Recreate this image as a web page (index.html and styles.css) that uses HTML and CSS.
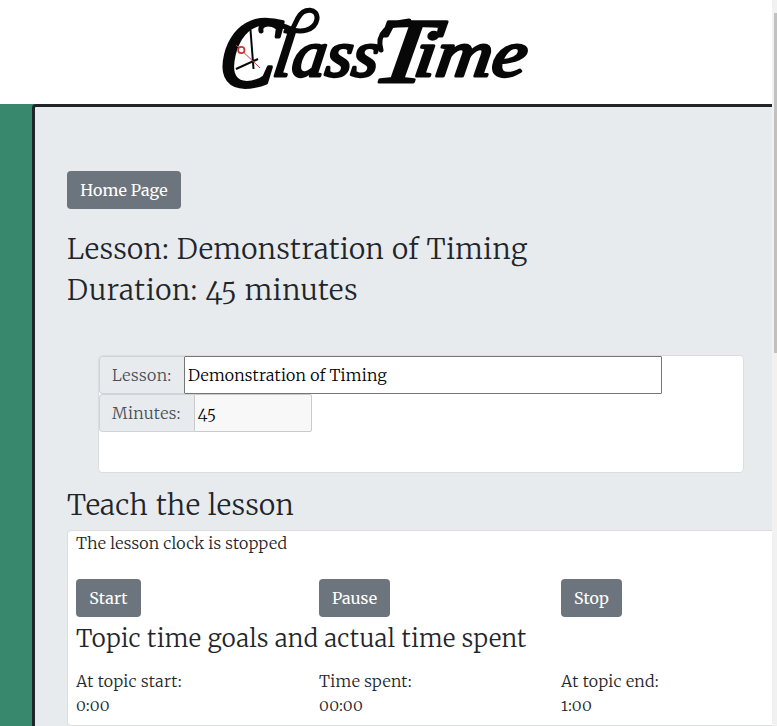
FILE: index.html
```html
<!DOCTYPE html>
<html lang="en">
<head>
<meta charset="utf-8">
<title>ClassTime</title>
<link rel="stylesheet" href="styles.css">
</head>
<body>
<div class="page">
  <header class="masthead">
    <svg class="logo" width="320" height="104" viewBox="214 0 320 104" role="img" aria-label="ClassTime">
      <text class="wordmark" transform="translate(0 80) skewX(-8) translate(0 -80)"><tspan class="cap-c" x="217" y="86" textLength="57" lengthAdjust="spacingAndGlyphs">C</tspan><tspan class="small" x="271" y="76" textLength="105" lengthAdjust="spacingAndGlyphs">lass</tspan><tspan class="cap-t" x="370" y="82" textLength="62" lengthAdjust="spacingAndGlyphs">T</tspan><tspan class="small" x="412" y="76" textLength="112" lengthAdjust="spacingAndGlyphs">ime</tspan></text>
      <path class="swash" d="M261 31 C259 22 273 23 286 27 C301 35 315 30 317 19 C318 8 304 7 298 18 L290 34"/>
      <path class="swash" d="M381 50 C376 34 388 23 409 21"/>
      <path d="M250.500 30 L253.500 69 M236 69 L258 59" stroke="#080808" stroke-width="2" fill="none"/>
      <path d="M236 45 L260 68" stroke="#c9343b" stroke-width="1"/>
      <circle cx="241.300" cy="50" r="3.200" fill="#fff" stroke="#c9343b" stroke-width="1.700"/>
    </svg>
  </header>
  <main class="panel">
    <button class="btn home">Home Page</button>
    <h2 class="title">Lesson: Demonstration of Timing<br><span class="duration">Duration: 45 minutes</span></h2>
    <section class="card details">
      <div class="group"><label class="label-lesson">Lesson:</label><div class="field name"><span>Demonstration of Timing</span></div></div>
      <div class="group"><label class="label-minutes">Minutes:</label><div class="field minutes"><span>45</span></div></div>
    </section>
    <h2 class="teach">Teach the lesson</h2>
    <section class="card clock">
      <p class="status">The lesson clock is stopped</p>
      <div class="row actions">
        <div><button class="btn start">Start</button></div>
        <div><button class="btn pause">Pause</button></div>
        <div><button class="btn stop">Stop</button></div>
      </div>
      <h3>Topic time goals and actual time spent</h3>
      <div class="row times">
        <div><span>At topic start:</span><br><span>0:00</span></div>
        <div><span>Time spent:</span><br><span>00:00</span></div>
        <div><span>At topic end:</span><br><span>1:00</span></div>
      </div>
    </section>
  </main>
</div>
<div class="scrollbar"><div class="thumb"></div></div>
</body>
</html>
```
FILE: styles.css
```css
* { box-sizing: border-box; }
body {
  margin: 0;
  height: 726px;
  display: flex;
  overflow: hidden;
  background: #38886e;
  color: #212529;
  font: 300 16px/24px Merriweather, "DejaVu Serif Condensed", "DejaVu Serif", serif;
  font-variant-numeric: oldstyle-nums;
  letter-spacing: 0.2px;
}
.page { width: 772px; height: 726px; overflow: hidden; }
.masthead { height: 104px; padding-left: 214px; background: #fff; }
.logo { display: block; overflow: visible; }
.wordmark {
  font-family: "Liberation Serif", serif;
  font-style: italic;
  font-weight: 400;
  letter-spacing: 0;
  fill: #080808;
  stroke: #080808;
  stroke-width: 3px;
  stroke-linejoin: round;
}
.swash { fill: none; stroke: #080808; stroke-width: 5px; stroke-linecap: round; }
.cap-c { font-size: 100px; stroke-width: 4px; }
.cap-t { font-size: 92px; }
.small { font-size: 66px; }
.panel {
  width: 800px;
  height: 700px;
  margin-left: 32px;
  padding: 64px 32px 0;
  border: 3px solid #212529;
  border-radius: 4px;
  background: #e8ebee;
}
.btn {
  display: block;
  height: 38px;
  padding: 0;
  border: 0;
  border-radius: 4px;
  background: #6c757d;
  color: #fff;
  font: inherit;
  font-weight: 400;
  letter-spacing: 0.1px;
}
.home { width: 114px; }
.start { width: 65px; }
.pause { width: 71px; }
.stop { width: 61px; }
h2, h3, p { margin: 0; font-weight: 300; white-space: nowrap; }
h2 { font-size: 28px; line-height: 41px; letter-spacing: 0.4px; word-spacing: 0.7px; }
.duration { letter-spacing: 0.65px; }
.title { margin-top: 20px; }
.card { border: 1px solid #dcddde; border-radius: 4px; background: #fff; }
.details { width: 646px; height: 118px; margin: 44px 0 0 31px; }
.group { display: flex; height: 38px; }
.group label {
  padding: 6px 0 0 12px;
  border: 1px solid #ced4da;
  border-right: 0;
  border-radius: 4px 0 0 4px;
  background: #e8ebee;
  color: #495057;
  letter-spacing: 0.4px;
}
.label-lesson { width: 85px; }
.label-minutes { width: 95px; }
.field { padding: 6px 3px 0; color: #000; }
.name { width: 478px; border: 1px solid #767676; border-radius: 1px; }
.minutes { width: 118px; border: 1px solid #c8cacc; border-radius: 0 2px 2px 0; background: #f8f8f8; letter-spacing: 0.8px; }
.teach { margin-top: 12px; }
.clock { width: 760px; height: 196px; margin: 4px 0 0; padding: 0 8px; }
.row { display: grid; grid-template-columns: 243px 242px 200px; }
.actions { margin-top: 24px; }
h3 { margin-top: 5px; font-size: 24px; line-height: 34px; letter-spacing: 0.37px; }
.times { margin-top: 13px; letter-spacing: 0.3px; }
.scrollbar { width: 5px; height: 726px; padding: 13px 0 0 2px; background: #f1f1f1; }
.thumb { height: 340px; background: #c1c1c1; }
```
